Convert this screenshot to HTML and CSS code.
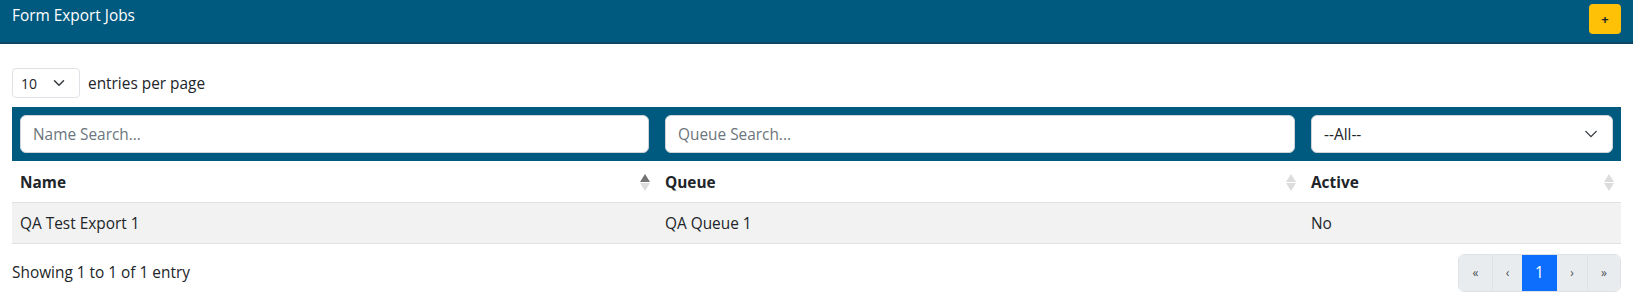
FILE: index.html
```html
<!DOCTYPE html>
<html>
<head>
<meta charset="utf-8">
<link rel="stylesheet" href="styles.css">
</head>
<body>
<header class="topbar">
  <div class="title">Form Export Jobs</div>
  <button class="add-btn" type="button">+</button>
</header>
<main class="content">
  <div class="per-page">
    <div class="select-sm">
      <span>10</span>
      <svg class="chev" width="12" height="12" viewBox="0 0 16 16"><path d="M2 5l6 6 6-6" fill="none" stroke="#343a40" stroke-width="2" stroke-linecap="round" stroke-linejoin="round"/></svg>
    </div>
    <span class="per-label">entries per page</span>
  </div>
  <table class="grid">
    <colgroup>
      <col class="c1"><col class="c2"><col class="c3">
    </colgroup>
    <thead>
      <tr class="filters">
        <th><div class="input">Name Search...</div></th>
        <th><div class="input">Queue Search...</div></th>
        <th><div class="input select"><span>--All--</span>
          <svg class="chev" width="14" height="14" viewBox="0 0 16 16"><path d="M2 5l6 6 6-6" fill="none" stroke="#343a40" stroke-width="1.6" stroke-linecap="round" stroke-linejoin="round"/></svg></div></th>
      </tr>
      <tr class="heads">
        <th><div class="hcell"><span>Name</span><span class="sort"><i class="up dark"></i><i class="down"></i></span></div></th>
        <th><div class="hcell"><span>Queue</span><span class="sort"><i class="up"></i><i class="down"></i></span></div></th>
        <th><div class="hcell"><span>Active</span><span class="sort"><i class="up"></i><i class="down"></i></span></div></th>
      </tr>
    </thead>
    <tbody>
      <tr class="row">
        <td>QA Test Export 1</td>
        <td>QA Queue 1</td>
        <td>No</td>
      </tr>
    </tbody>
  </table>
  <div class="footer">
    <span class="info">Showing 1 to 1 of 1 entry</span>
    <nav class="pager">
      <a class="pg first">«</a>
      <a class="pg prev">‹</a>
      <a class="pg active">1</a>
      <a class="pg next">›</a>
      <a class="pg last">»</a>
    </nav>
  </div>
</main>
</body>
</html>
```
FILE: styles.css
```css
* { box-sizing: border-box; }
body {
  margin: 0;
  font-family: "Open Sans", "Noto Sans", sans-serif;
  font-size: 15.4px;
  color: #212529;
  background: #fff;
}
.topbar {
  height: 44px;
  background: #00597e;
  border-bottom: 2px solid #0b4763;
  display: flex;
  align-items: flex-start;
  justify-content: space-between;
  padding: 0 12px;
}
.title {
  color: #fff;
  font-size: 15.4px;
  line-height: 16px;
  margin-top: 8px;
}
.add-btn {
  margin-top: 4px;
  width: 32px;
  height: 30px;
  border: none;
  border-radius: 4px;
  background: #ffc107;
  color: #212529;
  font-size: 13px;
  font-weight: bold;
  padding: 0;
  font-family: inherit;
}
.content { padding: 0 12px; }
.per-page {
  display: flex;
  align-items: center;
  gap: 8px;
  margin-top: 24px;
  height: 30px;
}
.select-sm {
  width: 68px;
  height: 30px;
  border: 1px solid #dee2e6;
  border-radius: 4px;
  display: flex;
  align-items: center;
  justify-content: space-between;
  padding: 0 14px 0 8px;
  font-size: 14px;
}
.grid {
  width: 100%;
  border-collapse: collapse;
  margin-top: 9px;
  table-layout: fixed;
}
.c1 { width: 645px; }
.c2 { width: 646px; }
.c3 { width: 318px; }
.filters { background: #00597e; }
.filters th { padding: 8px; font-weight: normal; }
.input {
  height: 38px;
  background: #fff;
  border: 1px solid #ced4da;
  border-radius: 6px;
  display: flex;
  align-items: center;
  padding: 0 12px;
  color: #6c757d;
  font-size: 15.4px;
  text-align: left;
}
.input.select { justify-content: space-between; color: #212529; padding-right: 14px; }
.heads th {
  height: 41px;
  padding: 3px 8px 0;
  border-bottom: 1px solid #dee2e6;
  text-align: left;
  font-weight: bold;
}
.hcell {
  display: flex;
  align-items: center;
  justify-content: space-between;
}
.sort {
  display: flex;
  flex-direction: column;
  gap: 1px;
  margin-right: -1px;
}
.sort i {
  display: block;
  width: 0;
  height: 0;
  border-left: 5px solid transparent;
  border-right: 5px solid transparent;
}
.sort .up { border-bottom: 8px solid #dcdcdc; }
.sort .down { border-top: 8px solid #dcdcdc; }
.sort .up.dark { border-bottom-color: #737373; }
.row td {
  height: 41px;
  padding: 2px 8px 0;
  background: #f2f2f2;
  border-bottom: 1px solid #dee2e6;
}
.footer {
  display: flex;
  justify-content: space-between;
  align-items: center;
  margin-top: 10px;
}
.pager {
  display: flex;
  height: 38px;
  border: 1px solid #dee2e6;
  border-radius: 6px;
  overflow: hidden;
}
.pg {
  display: flex;
  align-items: center;
  justify-content: center;
  background: #e9ecef;
  color: #495057;
  font-size: 12px;
  border-left: 1px solid #dee2e6;
  width: 30px;
}
.pg.first { border-left: none; width: 33px; }
.pg.last { width: 33px; }
.pg.active {
  background: #0d6efd;
  color: #fff;
  font-size: 15.4px;
  width: 35px;
  border-left: none;
}
.pg.next { border-left: none; }
```
